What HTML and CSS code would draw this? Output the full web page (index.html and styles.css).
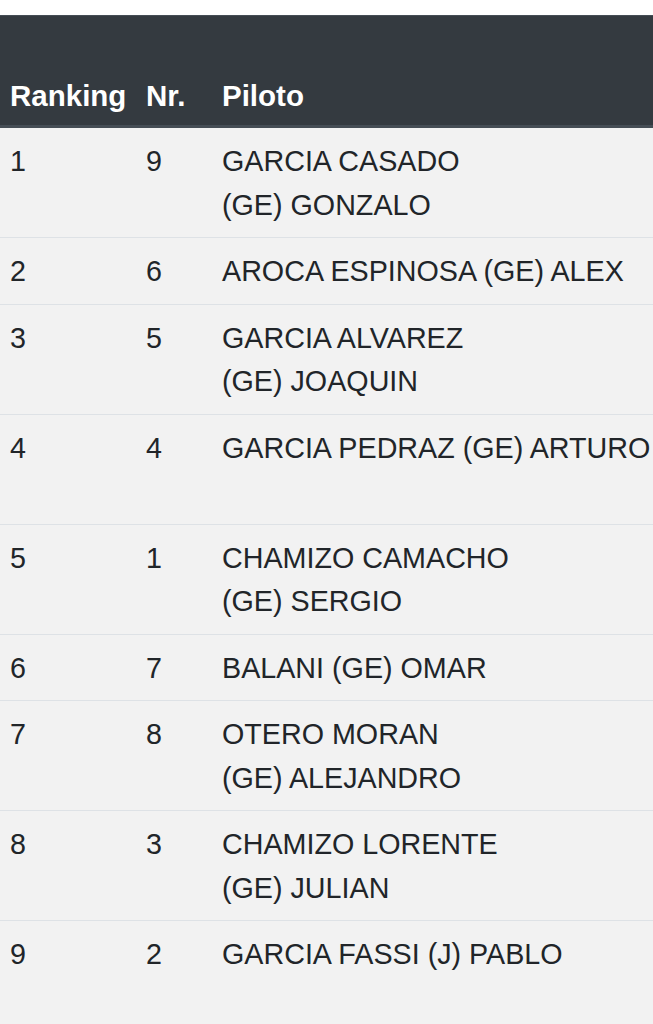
FILE: index.html
```html
<!DOCTYPE html>
<html lang="es">
<head>
<meta charset="utf-8">
<title>Ranking</title>
<link rel="stylesheet" href="styles.css">
</head>
<body>
<div class="wrap">
<table class="ranking">
  <colgroup>
    <col class="c-rank">
    <col class="c-nr">
    <col class="c-name">
  </colgroup>
  <thead>
    <tr><th>Ranking</th><th>Nr.</th><th>Piloto</th></tr>
  </thead>
  <tbody>
    <tr><td>1</td><td>9</td><td>GARCIA CASADO<br>(GE) GONZALO</td></tr>
    <tr><td>2</td><td>6</td><td>AROCA ESPINOSA (GE) ALEX</td></tr>
    <tr><td>3</td><td>5</td><td>GARCIA ALVAREZ<br>(GE) JOAQUIN</td></tr>
    <tr><td>4</td><td>4</td><td>GARCIA PEDRAZ (GE) ARTURO<br>&nbsp;</td></tr>
    <tr><td>5</td><td>1</td><td>CHAMIZO CAMACHO<br>(GE) SERGIO</td></tr>
    <tr><td>6</td><td>7</td><td>BALANI (GE) OMAR</td></tr>
    <tr><td>7</td><td>8</td><td>OTERO MORAN<br>(GE) ALEJANDRO</td></tr>
    <tr><td>8</td><td>3</td><td>CHAMIZO LORENTE<br>(GE) JULIAN</td></tr>
    <tr><td>9</td><td>2</td><td>GARCIA FASSI (J) PABLO<br>&nbsp;</td></tr>
  </tbody>
</table>
</div>
</body>
</html>
```
FILE: styles.css
```css
html, body {
  margin: 0;
  padding: 0;
  background: #ffffff;
}
body {
  font-family: "Liberation Sans", Arial, Helvetica, sans-serif;
  color: #212529;
  overflow: hidden;
}
.wrap {
  padding-top: 15px;
}
.ranking {
  width: 653px;
  border-collapse: collapse;
  table-layout: fixed;
}
.c-rank { width: 136px; }
.c-nr { width: 76px; }
.ranking th,
.ranking td {
  text-align: left;
  padding-left: 10px;
  padding-right: 0;
  white-space: nowrap;
  overflow: visible;
}
.ranking thead th {
  background: #343a40;
  color: #ffffff;
  font-weight: bold;
  font-size: 29.5px;
  line-height: 43.5px;
  height: 43.5px;
  padding-top: 58px;
  padding-bottom: 7.5px;
  vertical-align: bottom;
  border-top: 1px solid #454d55;
  border-bottom: 3px solid #454d55;
}
.ranking tbody td {
  background: #f2f2f2;
  font-size: 28.7px;
  line-height: 43.5px;
  padding-top: 12px;
  padding-bottom: 10px;
  vertical-align: top;
  border-top: 1px solid #dee2e6;
}
.ranking tbody tr:first-child td {
  border-top: 0;
}
```
